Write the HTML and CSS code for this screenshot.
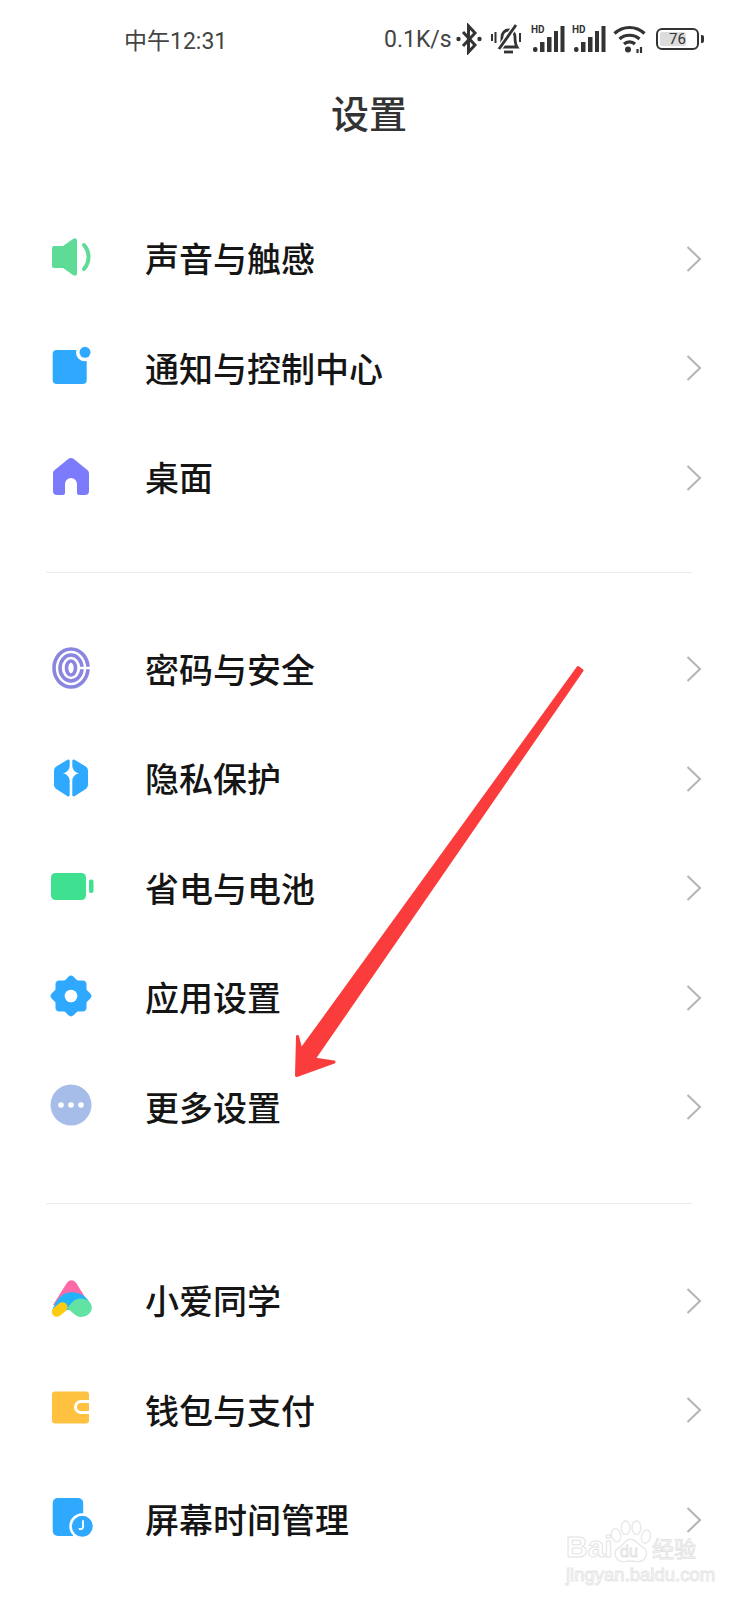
FILE: index.html
```html
<!DOCTYPE html>
<html lang="zh-CN">
<head>
    <meta charset="UTF-8">
    <meta name="viewport" content="width=device-width, initial-scale=1.0">
    <title>设置</title>
    <link rel="stylesheet" href="styles.css">
</head>
<body>
<div class="phone">
    <div class="status-bar">
        <span class="status-time">中午12:31</span>
        <span class="status-speed">0.1K/s</span>
        <svg class="ic-bt" width="26" height="32" viewBox="0 0 26 32"><path d="M7 9l12 13-6.500 7V3l6.500 7L7 23" fill="none" stroke="#333" stroke-width="3"/><circle cx="2.500" cy="16" r="2.200" fill="#333"/><circle cx="23.500" cy="16" r="2.200" fill="#333"/></svg>
        <svg class="ic-mute" width="32" height="34" viewBox="0 0 32 34"><path d="M9 25c2-3 2-6 2-10 0-4 3-7 6.500-7s6.500 3 6.500 7c0 4 0 7 2 10z" fill="none" stroke="#333" stroke-width="2.800"/><path d="M13 30h9" stroke="#333" stroke-width="2.800"/><path d="M25 3L8 27" stroke="#fff" stroke-width="5.500"/><path d="M25 3L8 27" stroke="#333" stroke-width="2.800"/><path d="M1 12v7M4.500 10v11M29 11v9" stroke="#333" stroke-width="2" fill="none"/></svg>
        <svg class="ic-signal" width="34" height="28" viewBox="0 0 34 28"><text x="0" y="8" class="hd-text">HD</text><rect x="2" y="22" width="4.500" height="5" rx="2" fill="#333"/><rect x="9" y="17" width="4.500" height="10" fill="#333"/><rect x="16" y="12" width="4.500" height="15" fill="#333"/><rect x="23" y="6" width="4" height="21" fill="#333"/><rect x="29.500" y="1" width="4" height="26" fill="#333"/></svg>
        <svg class="ic-signal" width="34" height="28" viewBox="0 0 34 28"><text x="0" y="8" class="hd-text">HD</text><rect x="2" y="22" width="4.500" height="5" rx="2" fill="#333"/><rect x="9" y="17" width="4.500" height="10" fill="#333"/><rect x="16" y="12" width="4.500" height="15" fill="#333"/><rect x="23" y="6" width="4" height="21" fill="#333"/><rect x="29.500" y="1" width="4" height="26" fill="#333"/></svg>
        <svg class="ic-wifi" width="33" height="30" viewBox="0 0 33 30"><path d="M1.500 9.500c8.500-8 21.500-8 30 0M6.500 15c5.500-5 14.500-5 20 0M11 20c3-2.800 8-2.800 11 0" fill="none" stroke="#333" stroke-width="3.200"/><circle cx="15" cy="25.500" r="3" fill="#333"/><path d="M24.500 25v4M28 23v6" stroke="#333" stroke-width="2.200"/></svg>
        <div class="battery"><div class="battery-fill"></div><span class="battery-num">76</span></div>
        <div class="battery-nub"></div>
    </div>

    <h1 class="page-title">设置</h1>

    <div class="group">
        <div class="row">
            <svg class="row-icon" width="48" height="48" viewBox="0 0 48 48"><path d="M7 11h9L26 4c2-1.400 4-.8 4 2v32c0 2.800-2 3.400-4 2L16 33H7a2 2 0 0 1-2-2V13a2 2 0 0 1 2-2z" fill="#5ddb97"/><path d="M37 10c6 7 6 17 0 24" fill="none" stroke="#5ddb97" stroke-width="4" stroke-linecap="round"/></svg>
            <span class="row-label">声音与触感</span>
            <svg class="chevron" width="16" height="28" viewBox="0 0 16 28"><path d="M1.500 2L14 14 1.500 26" fill="none" stroke="#b4b4b4" stroke-width="2"/></svg>
        </div>
        <div class="row">
            <svg class="row-icon" width="48" height="48" viewBox="0 0 48 48"><rect x="5.700" y="6" width="34" height="34" rx="4" fill="#2fa9ff"/><circle cx="38" cy="8.300" r="9" fill="#fff"/><circle cx="38" cy="8.300" r="5.500" fill="#2fa9ff"/></svg>
            <span class="row-label">通知与控制中心</span>
            <svg class="chevron" width="16" height="28" viewBox="0 0 16 28"><path d="M1.500 2L14 14 1.500 26" fill="none" stroke="#b4b4b4" stroke-width="2"/></svg>
        </div>
        <div class="row">
            <svg class="row-icon" width="48" height="48" viewBox="0 0 48 48"><path d="M21.500 4.800c1.500-1.200 3.500-1.200 5 0l13.500 11c1.300 1 2 2.200 2 4V37a4 4 0 0 1-4 4h-6a2 2 0 0 1-2-2v-9a6 6 0 0 0-12 0v9a2 2 0 0 1-2 2h-6a4 4 0 0 1-4-4V19.800c0-1.800.7-3 2-4z" fill="#7b7bfb"/></svg>
            <span class="row-label">桌面</span>
            <svg class="chevron" width="16" height="28" viewBox="0 0 16 28"><path d="M1.500 2L14 14 1.500 26" fill="none" stroke="#b4b4b4" stroke-width="2"/></svg>
        </div>
    </div>

    <div class="divider"></div>

    <div class="group">
        <div class="row">
            <svg class="row-icon" width="48" height="48" viewBox="0 0 48 48"><g fill="none" stroke="#8a85e0" stroke-width="3.600"><ellipse cx="24" cy="23" rx="17" ry="19"/><ellipse cx="24" cy="23" rx="11" ry="13"/><ellipse cx="24" cy="23" rx="4.500" ry="7"/></g><path d="M31 23h14" stroke="#fff" stroke-width="2.500"/></svg>
            <span class="row-label">密码与安全</span>
            <svg class="chevron" width="16" height="28" viewBox="0 0 16 28"><path d="M1.500 2L14 14 1.500 26" fill="none" stroke="#b4b4b4" stroke-width="2"/></svg>
        </div>
        <div class="row">
            <svg class="row-icon" width="48" height="48" viewBox="0 0 48 48"><path d="M20.500 4.800c1.300-.7 2.200 0 2.200 1.200v5c-.4 4-3 6.600-7 7.300 4 .7 6.600 3.300 7 7.300V40c0 1.200-.9 1.800-2.200 1.200L10 34.500c-2-1.200-3-2.800-3-5V16c0-2.200 1-3.800 3-5z" fill="#2fa9ff"/><path d="M27.500 4.800c-1.300-.7-2.200 0-2.200 1.200v5c.4 4 3 6.600 7 7.300-4 .7-6.600 3.300-7 7.300V40c0 1.200.9 1.800 2.200 1.200L38 34.500c2-1.200 3-2.800 3-5V16c0-2.200-1-3.800-3-5z" fill="#2fa9ff"/></svg>
            <span class="row-label">隐私保护</span>
            <svg class="chevron" width="16" height="28" viewBox="0 0 16 28"><path d="M1.500 2L14 14 1.500 26" fill="none" stroke="#b4b4b4" stroke-width="2"/></svg>
        </div>
        <div class="row">
            <svg class="row-icon" width="48" height="48" viewBox="0 0 48 48"><rect x="4" y="9" width="35" height="27" rx="4.500" fill="#3fe08f"/><rect x="42" y="15.500" width="4.500" height="13.500" rx="2" fill="#3fe08f"/></svg>
            <span class="row-label">省电与电池</span>
            <svg class="chevron" width="16" height="28" viewBox="0 0 16 28"><path d="M1.500 2L14 14 1.500 26" fill="none" stroke="#b4b4b4" stroke-width="2"/></svg>
        </div>
        <div class="row">
            <svg class="row-icon" width="48" height="48" viewBox="0 0 48 48"><g fill="#2fa9ff"><rect x="8.500" y="6.500" width="31" height="31" rx="4"/><rect x="8.500" y="6.500" width="31" height="31" rx="4" transform="rotate(45 24 22)"/></g><circle cx="24" cy="22" r="6.300" fill="#fff"/></svg>
            <span class="row-label">应用设置</span>
            <svg class="chevron" width="16" height="28" viewBox="0 0 16 28"><path d="M1.500 2L14 14 1.500 26" fill="none" stroke="#b4b4b4" stroke-width="2"/></svg>
        </div>
        <div class="row">
            <svg class="row-icon" width="48" height="48" viewBox="0 0 48 48"><circle cx="24" cy="22" r="20.500" fill="#a6bdea"/><g fill="#fff"><circle cx="14" cy="22" r="2.800"/><circle cx="24" cy="22" r="2.800"/><circle cx="34" cy="22" r="2.800"/></g></svg>
            <span class="row-label">更多设置</span>
            <svg class="chevron" width="16" height="28" viewBox="0 0 16 28"><path d="M1.500 2L14 14 1.500 26" fill="none" stroke="#b4b4b4" stroke-width="2"/></svg>
        </div>
    </div>

    <div class="divider divider-low"></div>

    <div class="group">
        <div class="row">
            <svg class="row-icon" width="48" height="48" viewBox="0 0 48 48"><path d="M19.500 6.500c2.500-4.500 7.500-4.500 10 0L43 28H6z" fill="#fb6aa6"/><path d="M5 34C9 22 16 15.300 24.700 15.300 33 15.300 40 19 44.500 29L34 33H20l-10 4z" fill="#22b4fb"/><path d="M9.800 34.800L15.500 30.200" stroke="#fdcb11" stroke-width="10" stroke-linecap="round"/><path d="M20 32c3-5 7.500-10.500 13.500-10.500 6.500 0 11.300 4 11.300 9 0 5.500-5 9.500-11 9.500-6 0-8-6-13.800-8z" fill="#62e3a3"/></svg>
            <span class="row-label">小爱同学</span>
            <svg class="chevron" width="16" height="28" viewBox="0 0 16 28"><path d="M1.500 2L14 14 1.500 26" fill="none" stroke="#b4b4b4" stroke-width="2"/></svg>
        </div>
        <div class="row">
            <svg class="row-icon" width="48" height="48" viewBox="0 0 48 48"><rect x="5" y="5.500" width="37" height="32" rx="3" fill="#ffc240"/><path d="M42 15.500h-8a5 5 0 0 0 0 11h8" fill="none" stroke="#fff" stroke-width="3"/></svg>
            <span class="row-label">钱包与支付</span>
            <svg class="chevron" width="16" height="28" viewBox="0 0 16 28"><path d="M1.500 2L14 14 1.500 26" fill="none" stroke="#b4b4b4" stroke-width="2"/></svg>
        </div>
        <div class="row">
            <svg class="row-icon" width="48" height="48" viewBox="0 0 48 48"><rect x="5.700" y="2" width="30.500" height="38" rx="5" fill="#2fa9ff"/><circle cx="35.300" cy="30.300" r="13" fill="#fff"/><circle cx="35.300" cy="30.300" r="10.500" fill="#2fa9ff"/><path d="M36 25v6c0 1.500-1.500 2.300-3.500 2" fill="none" stroke="#fff" stroke-width="1.800" stroke-linecap="round"/></svg>
            <span class="row-label">屏幕时间管理</span>
            <svg class="chevron" width="16" height="28" viewBox="0 0 16 28"><path d="M1.500 2L14 14 1.500 26" fill="none" stroke="#b4b4b4" stroke-width="2"/></svg>
        </div>
    </div>

    <!-- red arrow drawn on top of the screenshot -->
    <svg class="arrow" width="300" height="425" viewBox="0 0 300 425"><path d="M293 7.600L16 390 12.500 376.500 11.500 415.500 49 402 29 399 297 10.400z" fill="#fb3c3c" stroke="#fb3c3c" stroke-width="3" stroke-linejoin="round"/></svg>

    <!-- baidu watermark bottom right -->
    <div class="watermark">
        <svg class="wm-paw" width="42" height="46" viewBox="0 0 62 64"><g fill="#fff" stroke="#e8e8e8" stroke-width="2"><ellipse cx="9" cy="22" rx="6.500" ry="10" transform="rotate(-15 9 22)"/><ellipse cx="23" cy="11" rx="6.500" ry="10"/><ellipse cx="39" cy="11" rx="6.500" ry="10"/><ellipse cx="53" cy="24" rx="6.500" ry="10" transform="rotate(15 53 24)"/><path d="M31 28c7 0 10 8 18 12 9 6 4 22-8 21-7-1-13-2-20 0-12 1-18-13-9-20 8-4 10-13 19-13z"/></g></svg>
        <div class="wm-top"><span class="wm-bai">Bai</span><span class="wm-du">du</span><span class="wm-jy">经验</span></div>
        <div class="wm-url">jingyan.baidu.com</div>
    </div>
</div>
</body>
</html>
```

FILE: styles.css
```css
* {
    box-sizing: border-box;
}

body {
    margin: 0;
    padding: 0;
    background: #fff;
    font-family: "Noto Sans CJK SC", "Noto Sans", sans-serif;
}

.phone {
    position: relative;
    width: 738px;
    height: 1600px;
    overflow: hidden;
    background: #fff;
}

/* status bar */
.status-bar {
    display: flex;
    align-items: center;
    height: 78px;
    padding-left: 124px;
    color: #444;
    font-size: 23px;
    font-family: Roboto, "Noto Sans CJK SC", sans-serif;
}

.status-time {
    width: 260px;
}

.status-speed {
    width: 72px;
}

.ic-bt {
    margin-right: 9px;
}

.ic-mute {
    margin-right: 8px;
}

.ic-signal {
    margin-right: 7px;
}

.ic-wifi {
    margin: 0 10px 0 0;
}

.hd-text {
    font-family: Roboto, sans-serif;
    font-size: 10px;
    font-weight: 700;
    fill: #333;
}

.battery {
    position: relative;
    width: 43px;
    height: 22px;
    border: 2px solid #333;
    border-radius: 6px;
    overflow: hidden;
    display: flex;
    align-items: center;
    justify-content: center;
}

.battery-fill {
    position: absolute;
    left: 2px;
    top: 2px;
    bottom: 2px;
    width: 26px;
    background: #dcdcdc;
    border-radius: 2px;
}

.battery-num {
    position: relative;
    font-size: 15px;
    color: #333;
}

.battery-nub {
    width: 3px;
    height: 8px;
    margin-left: 2px;
    background: #333;
    border-radius: 0 2px 2px 0;
}

.page-title {
    margin: 0 0 54px;
    height: 72px;
    line-height: 68px;
    text-align: center;
    font-size: 38px;
    font-weight: 500;
    color: #333;
}

/* settings list */
.row {
    display: flex;
    align-items: center;
    height: 109.5px;
    padding: 0 36px 0 47px;
}

.row-icon {
    flex: none;
    margin-right: 50px;
}

.row-label {
    flex: 1;
    padding-bottom: 2px;
    font-size: 34px;
    font-weight: 500;
    color: #151515;
}

.chevron {
    flex: none;
}

.divider {
    height: 1px;
    margin: 39px 46px 42px;
    background: #ececec;
}

.divider-low {
    margin-top: 41px;
}

/* overlays */
.arrow {
    position: absolute;
    left: 285px;
    top: 660px;
}

.watermark {
    position: absolute;
    left: 566px;
    top: 1512px;
    width: 140px;
}

.wm-paw {
    position: absolute;
    left: 44px;
    top: 7px;
}

.wm-top {
    position: relative;
    display: flex;
    align-items: center;
    height: 50px;
    padding-top: 20px;
}

.wm-bai,
.wm-du,
.wm-jy {
    color: #fff;
    -webkit-text-stroke: 1px #e4e4e4;
    font-family: "Liberation Sans", sans-serif;
}

.wm-bai {
    font-size: 30px;
    font-weight: 700;
    width: 48px;
}

.wm-du {
    font-size: 16px;
    width: 38px;
    padding: 10px 0 0 6px;
}

.wm-jy {
    font-family: "Noto Sans CJK SC", sans-serif;
    font-size: 22px;
}

.wm-url {
    margin-top: 2px;
    color: #fff;
    -webkit-text-stroke: 1px #e6e6e6;
    font-family: "Liberation Sans", sans-serif;
    font-size: 18.500px;
    white-space: nowrap;
}
```
